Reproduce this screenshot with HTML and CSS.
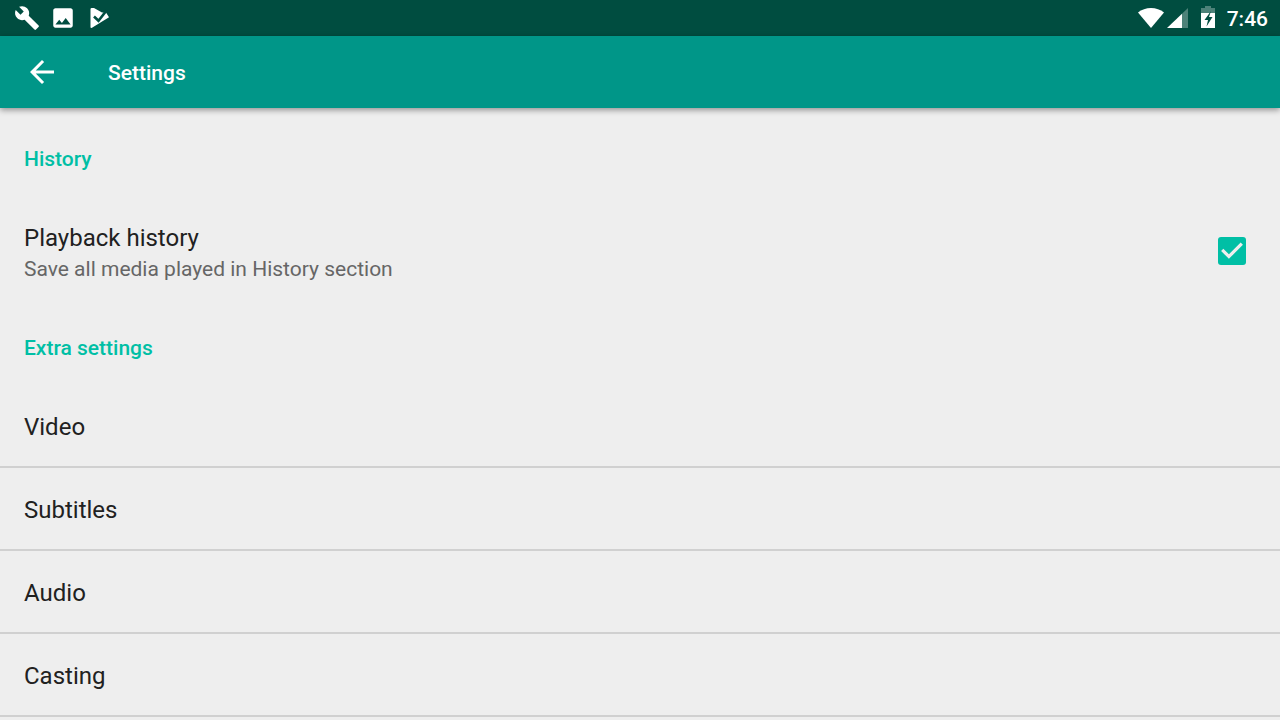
FILE: index.html
```html
<!DOCTYPE html>
<html lang="en">
<head>
  <meta charset="utf-8">
  <title>Settings</title>
  <link rel="stylesheet" href="styles.css">
</head>
<body>
  <div class="status-bar">
    <div class="notifications">
      <svg class="icon" viewBox="0 0 24 24"><path d="M22.7 19l-9.1-9.1c.9-2.3.4-5-1.5-6.9-2-2-5-2.4-7.4-1.3L9 6 6 9 1.6 4.7C.4 7.1.9 10.1 2.9 12.1c1.9 1.9 4.6 2.4 6.9 1.5l9.1 9.1c.4.4 1 .4 1.4 0l2.3-2.3c.5-.4.5-1.1.1-1.4z"/></svg>
      <svg class="icon" viewBox="0 0 24 24"><path d="M21 19V5c0-1.1-.9-2-2-2H5c-1.1 0-2 .9-2 2v14c0 1.1.9 2 2 2h14c1.1 0 2-.9 2-2zM8.5 13.5l2.5 3.01L14.5 12l4.5 6H5l3.5-4.5z"/></svg>
      <svg class="icon" viewBox="0 0 26 26"><path d="M4.500 4.200q0-1.200 1.200-1.200H8l8 4.500h4l3 4.700L6 22.800q-1.500.5-1.500-.8z"/><path class="check" d="M8 11.500l4.500 4.300L20.500 5.500"/></svg>
    </div>
    <div class="system">
      <svg class="wifi" viewBox="0 0 26 20"><path d="M0 4.500C7-1.500 19-1.500 26 4.500L13 20z"/></svg>
      <svg class="signal" viewBox="0 0 21 20"><path d="M15 5.700L21 0v20h-6z" fill-opacity=".3"/><path d="M0 20L15 5.700V20z"/></svg>
      <svg class="battery" viewBox="0 0 14 22"><path d="M4 0h6v2h4v5H0V2h4z" fill-opacity=".3"/><path d="M0 7h14v15H0z"/><path class="bolt" d="M10 5L3.500 14H7l-1.500 6.500 6-9.500H8z"/></svg>
      <span class="clock">7:46</span>
    </div>
  </div>

  <header class="toolbar">
    <button class="back" aria-label="Back">
      <svg viewBox="0 0 24 24"><path d="M20 11H7.830l5.590-5.590L12 4l-8 8 8 8 1.410-1.410L7.830 13H20v-2z"/></svg>
    </button>
    <h1>Settings</h1>
  </header>

  <main class="preferences">
    <h2>History</h2>
    <div class="check-row">
      <label for="playback-history">
        <span class="title">Playback history</span>
        <span class="summary">Save all media played in History section</span>
      </label>
      <input type="checkbox" id="playback-history" checked>
    </div>

    <h2>Extra settings</h2>
    <nav>
      <a class="row" href="#video">Video</a>
      <a class="row" href="#subtitles">Subtitles</a>
      <a class="row" href="#audio">Audio</a>
      <a class="row" href="#casting">Casting</a>
    </nav>
  </main>
</body>
</html>
```
FILE: styles.css
```css
body {
  margin: 0;
  background: #eeeeee;
  color: #212121;
  font-family: Roboto, sans-serif;
  font-size: 24px;
}

.status-bar {
  display: flex;
  justify-content: space-between;
  align-items: center;
  height: 36px;
  padding: 0 12px 0 14px;
  background: #004d40;
  color: white;
}

.status-bar svg {
  display: block;
  fill: white;
}

.notifications {
  display: flex;
  gap: 10px;
}

.icon {
  width: 26px;
  height: 26px;
}

.icon .check {
  fill: none;
  stroke: #004d40;
  stroke-width: 2.6;
}

.system {
  display: flex;
  align-items: center;
}

.wifi {
  width: 26px;
  height: 20px;
  margin-right: 3px;
}

.signal {
  width: 21px;
  height: 20px;
  margin-right: 13px;
}

.battery {
  width: 14px;
  height: 22px;
  margin-right: 12px;
  margin-bottom: 2px;
}

.status-bar .bolt {
  fill: #004d40;
}

.clock {
  padding-top: 2px;
  font-size: 21px;
  font-weight: 500;
  line-height: 34px;
}

.toolbar {
  display: flex;
  align-items: center;
  height: 72px;
  padding: 0 24px;
  background: #009688;
  color: white;
  box-shadow: 0 2px 6px rgba(0,0,0,0.4);
}

.back {
  width: 36px;
  height: 36px;
  padding: 0;
  margin-right: 48px;
  border: none;
  background: none;
  cursor: pointer;
}

.back svg {
  display: block;
  fill: white;
}

h1 {
  margin: 0;
  padding-top: 2px;
  font-size: 21px;
  font-weight: 500;
}

.preferences {
  padding-top: 9px;
}

h2 {
  margin: 0;
  padding: 6px 24px 0;
  font-size: 21px;
  font-weight: 500;
  line-height: 73px;
  color: #00bfa5;
}

.check-row {
  display: flex;
  justify-content: space-between;
  align-items: center;
  min-height: 110px;
  padding: 0 34px 0 24px;
}

.check-row label {
  padding-top: 4px;
}

.title,
.summary {
  display: block;
}

.title {
  line-height: 32px;
}

.summary {
  font-size: 21px;
  line-height: 30px;
  color: #666666;
}

input[type="checkbox"] {
  appearance: none;
  width: 28px;
  height: 28px;
  margin: 0;
  border-radius: 3px;
  border: 2px solid #666666;
}

input[type="checkbox"]:checked {
  border: none;
  background: #00bfa5;
}

/* Tick */
input[type="checkbox"]:checked::before {
  content: "";
  display: block;
  height: 100%;
  background: #eeeeee;
  clip-path: polygon(39% 78%, 11% 50%, 19% 42%, 39% 62%, 81% 20%, 89% 28%);
}

.row {
  display: block;
  padding: 4px 24px 0;
  border-bottom: 2px solid #d0d0d0;
  line-height: 77px;
  color: inherit;
  text-decoration: none;
}
```
